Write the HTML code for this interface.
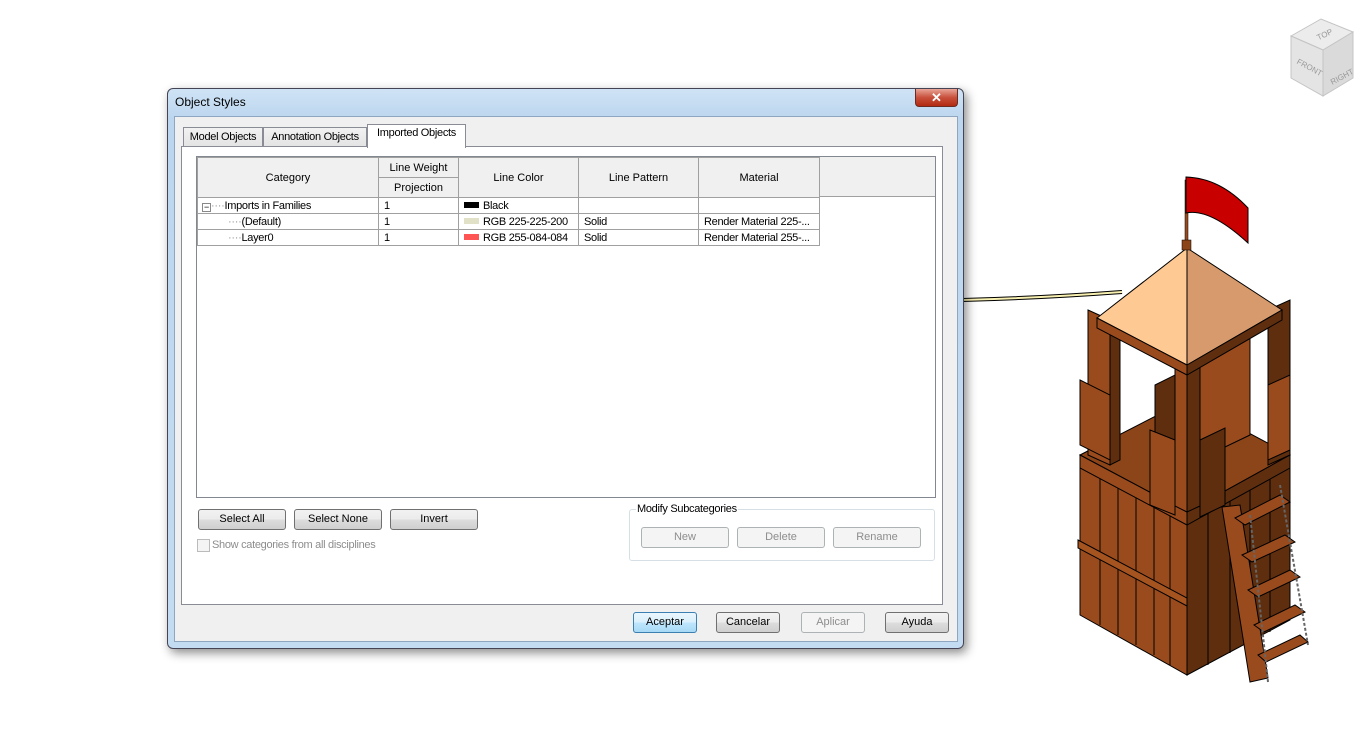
<!DOCTYPE html>
<html><head><meta charset="utf-8"><style>
*{margin:0;padding:0;box-sizing:border-box}
body{width:1355px;height:745px;background:#fff;position:relative;overflow:hidden;font-family:"Liberation Sans",sans-serif;font-size:11px;color:#000}
.abs{position:absolute}
.dlg{left:167px;top:88px;width:797px;height:561px;border:1px solid #445;border-radius:6px;background:linear-gradient(180deg,#cfe3f5 0px,#bcd6ef 30px,#c4dcf1 100%);box-shadow:3px 4px 10px rgba(0,0,0,.45)}
.client{left:6px;top:27px;width:784px;height:526px;background:#f0f0f0;border:1px solid #8ea6c0}
.btn{position:absolute;height:21px;border:1px solid #707070;border-radius:3px;background:linear-gradient(#f2f2f2 0,#ebebeb 50%,#dddddd 51%,#cfcfcf 100%);text-align:center;line-height:19px;font-size:11px}
.dis{border-color:#adb2b5;background:#f4f4f4;color:#8d8d8d}
.tab{position:absolute;height:20px;border:1px solid #898c95;border-bottom:none;background:linear-gradient(#f2f2f2,#e3e3e3);line-height:19px;font-size:11px;white-space:nowrap;text-align:center;letter-spacing:-0.3px}
table{border-collapse:collapse;position:absolute;left:0;top:0;table-layout:fixed;width:622px}
td{border:1px solid #a0a0a0;padding:0 5px;height:16px;font-size:11px;white-space:nowrap;overflow:hidden;letter-spacing:-0.3px}
th{border:1px solid #a0a0a0;background:#f0f0f0;font-weight:normal;font-size:11px;text-align:center;white-space:nowrap;overflow:hidden}
.sw{display:inline-block;width:15px;height:6px;margin-right:4px;vertical-align:1px}
</style></head><body>

<!-- view cube -->
<svg class="abs" style="left:1285px;top:14px" width="70" height="85">
<polygon points="6,22 36,5 68,18 38,36" fill="#ececec" stroke="#c4c4c4"/>
<polygon points="6,22 38,36 38,82 6,64" fill="#e4e4e4" stroke="#c4c4c4"/>
<polygon points="38,36 68,18 68,64 38,82" fill="#dadada" stroke="#c4c4c4"/>
<text x="32" y="24" font-size="8" fill="#999" transform="rotate(-25 38 22)">TOP</text>
<text x="10" y="54" font-size="8" fill="#999" transform="rotate(28 20 54)">FRONT</text>
<text x="43" y="66" font-size="8" fill="#999" transform="rotate(-28 55 60)">RIGHT</text>
</svg>

<!-- tower -->
<svg class="abs" style="left:950px;top:170px" width="405" height="520">
<path d="M12,130 Q90,128 172,122" stroke="#000" stroke-width="4" fill="none"/>
<path d="M12,130 Q90,128 172,122" stroke="#f8f0b0" stroke-width="2" fill="none"/>
<polygon points="130,290 237,350 237,505 130,445" fill="#9a4b1d" stroke="#000"/>
<polygon points="237,350 340,295 340,450 237,505" fill="#5e2e0f" stroke="#000"/>
<g stroke="#000" stroke-width="1">
<line x1="150" y1="300" x2="150" y2="455"/><line x1="168" y1="310" x2="168" y2="465"/><line x1="186" y1="320" x2="186" y2="475"/><line x1="204" y1="330" x2="204" y2="485"/><line x1="220" y1="340" x2="220" y2="495"/>
<line x1="258" y1="340" x2="258" y2="495"/><line x1="280" y1="328" x2="280" y2="483"/><line x1="300" y1="318" x2="300" y2="473"/><line x1="320" y1="306" x2="320" y2="462"/>
</g>
<polygon points="128,370 237,428 237,436 128,378" fill="#a6541f" stroke="#000"/>
<polygon points="130,285 237,230 340,285 237,342" fill="#8c4419" stroke="#000"/>
<polygon points="130,285 237,342 237,355 130,298" fill="#9a4b1d" stroke="#000"/>
<polygon points="237,342 340,285 340,298 237,355" fill="#5e2e0f" stroke="#000"/>
<polygon points="248,190 300,165 300,265 248,290" fill="#9a4b1d" stroke="#000"/>
<polygon points="205,215 225,205 225,300 205,310" fill="#5e2e0f" stroke="#000"/>
<polygon points="138,140 160,150 160,295 138,285" fill="#9a4b1d" stroke="#000"/>
<polygon points="160,150 170,145 170,290 160,295" fill="#5e2e0f" stroke="#000"/>
<polygon points="318,140 340,130 340,285 318,295" fill="#5e2e0f" stroke="#000"/>
<polygon points="225,195 237,200 237,342 225,336" fill="#9a4b1d" stroke="#000"/>
<polygon points="237,200 250,194 250,336 237,342" fill="#5e2e0f" stroke="#000"/>
<polygon points="130,210 160,225 160,290 130,275" fill="#9a4b1d" stroke="#000"/>
<polygon points="318,215 340,205 340,280 318,290" fill="#9a4b1d" stroke="#000"/>
<polygon points="200,260 225,270 225,345 200,335" fill="#9a4b1d" stroke="#000"/>
<polygon points="250,270 275,258 275,335 250,347" fill="#5e2e0f" stroke="#000"/>
<polygon points="237,78 147,148 237,195" fill="#ffc993" stroke="#000"/>
<polygon points="237,78 332,140 237,195" fill="#d79a6c" stroke="#000"/>
<polygon points="147,148 237,195 237,205 147,158" fill="#9a4b1d" stroke="#000"/>
<polygon points="237,195 332,140 332,150 237,205" fill="#5e2e0f" stroke="#000"/>
<rect x="235" y="10" width="3" height="65" fill="#9a4b1d" stroke="#000" stroke-width=".5"/>
<rect x="232" y="70" width="9" height="10" fill="#8c4419" stroke="#000" stroke-width=".5"/>
<path d="M236,7 L236,43 Q260,38 298,73 L298,38 Q270,8 236,7Z" fill="#c80000" stroke="#000"/>
<polygon points="272,337 290,335 318,508 300,512" fill="#9a4b1d" stroke="#000"/>
<g fill="#9a4b1d" stroke="#000">
<polygon points="285,348 330,325 340,332 295,355"/><polygon points="292,385 335,365 345,372 302,392"/><polygon points="298,420 340,400 350,407 308,427"/><polygon points="304,455 345,435 355,442 314,462"/><polygon points="308,485 350,465 358,472 316,492"/>
</g>
<line x1="300" y1="345" x2="318" y2="512" stroke="#666" stroke-width="2" stroke-dasharray="3 2"/>
<line x1="330" y1="315" x2="358" y2="475" stroke="#666" stroke-width="2" stroke-dasharray="3 2"/>
</svg>

<div class="abs dlg">
 <div class="abs" style="left:7px;top:6px;font-size:12px">Object Styles</div>
 <div class="abs" style="left:747px;top:0;width:43px;height:18px;border:1px solid #6b2b22;border-top:none;border-radius:0 0 4px 4px;background:linear-gradient(#e9a597,#c8503c 50%,#b22a12);color:#fff;text-align:center;font-weight:bold;font-size:13px;line-height:17px">✕</div>
 <div class="abs client">
  <div class="tab" style="left:8px;top:10px;width:80px">Model Objects</div>
  <div class="tab" style="left:88px;top:10px;width:104px">Annotation Objects</div>
  <div class="tab" style="left:192px;top:7px;width:99px;height:24px;background:#fff;z-index:2;line-height:17px">Imported Objects</div>
  <div class="abs" style="left:6px;top:29px;width:762px;height:459px;background:#fff;border:1px solid #898c95">
   <div class="abs" style="left:14px;top:9px;width:740px;height:342px;border:1px solid #828790;background:#fff;overflow:hidden">
    <div class="abs" style="left:0;top:0;width:740px;height:40px;background:#f0f0f0;border-bottom:1px solid #a0a0a0"></div>
    <table>
     <colgroup><col style="width:181px"><col style="width:80px"><col style="width:120px"><col style="width:120px"><col style="width:121px"></colgroup>
     <tr style="height:20px"><th rowspan="2" style="height:40px">Category</th><th>Line Weight</th><th rowspan="2">Line Color</th><th rowspan="2">Line Pattern</th><th rowspan="2">Material</th></tr>
     <tr style="height:20px"><th>Projection</th></tr>
     <tr><td style="padding-left:4px"><span style="display:inline-block;width:9px;height:9px;border:1px solid #888;font-size:9px;line-height:6px;text-align:center;vertical-align:-1px">−</span><span style="color:#999">····</span>Imports in Families</td><td>1</td><td><span class="sw" style="background:#000"></span>Black</td><td></td><td></td></tr>
     <tr><td style="padding-left:30px"><span style="color:#999">····</span>(Default)</td><td>1</td><td><span class="sw" style="background:#e1e1c8"></span>RGB 225-225-200</td><td>Solid</td><td>Render Material 225-...</td></tr>
     <tr><td style="padding-left:30px"><span style="color:#999">····</span>Layer0</td><td>1</td><td><span class="sw" style="background:#ff5454"></span>RGB 255-084-084</td><td>Solid</td><td>Render Material 255-...</td></tr>
    </table>
   </div>
   <div class="btn" style="left:16px;top:362px;width:88px">Select All</div>
   <div class="btn" style="left:112px;top:362px;width:88px">Select None</div>
   <div class="btn" style="left:208px;top:362px;width:88px">Invert</div>
   <div class="abs" style="left:15px;top:392px;width:13px;height:13px;border:1px solid #bbb;background:#f4f4f4"></div>
   <div class="abs" style="left:30px;top:392px;color:#8d8d8d;letter-spacing:-0.3px">Show categories from all disciplines</div>
   <div class="abs" style="left:447px;top:362px;width:306px;height:52px;border:1px solid #d5dfe5;border-radius:3px"></div>
   <div class="abs" style="left:454px;top:356px;background:#fff;padding:0 1px;letter-spacing:-0.3px">Modify Subcategories</div>
   <div class="btn dis" style="left:459px;top:380px;width:88px">New</div>
   <div class="btn dis" style="left:555px;top:380px;width:88px">Delete</div>
   <div class="btn dis" style="left:651px;top:380px;width:88px">Rename</div>
  </div>
  <div class="btn" style="left:458px;top:495px;width:64px;border-color:#3c7fb1;background:linear-gradient(#eaf6fd,#d9f0fc 50%,#bee6fd 51%,#a7d9f5)">Aceptar</div>
  <div class="btn" style="left:541px;top:495px;width:64px">Cancelar</div>
  <div class="btn dis" style="left:626px;top:495px;width:64px">Aplicar</div>
  <div class="btn" style="left:710px;top:495px;width:64px">Ayuda</div>
 </div>
</div>
</body></html>
